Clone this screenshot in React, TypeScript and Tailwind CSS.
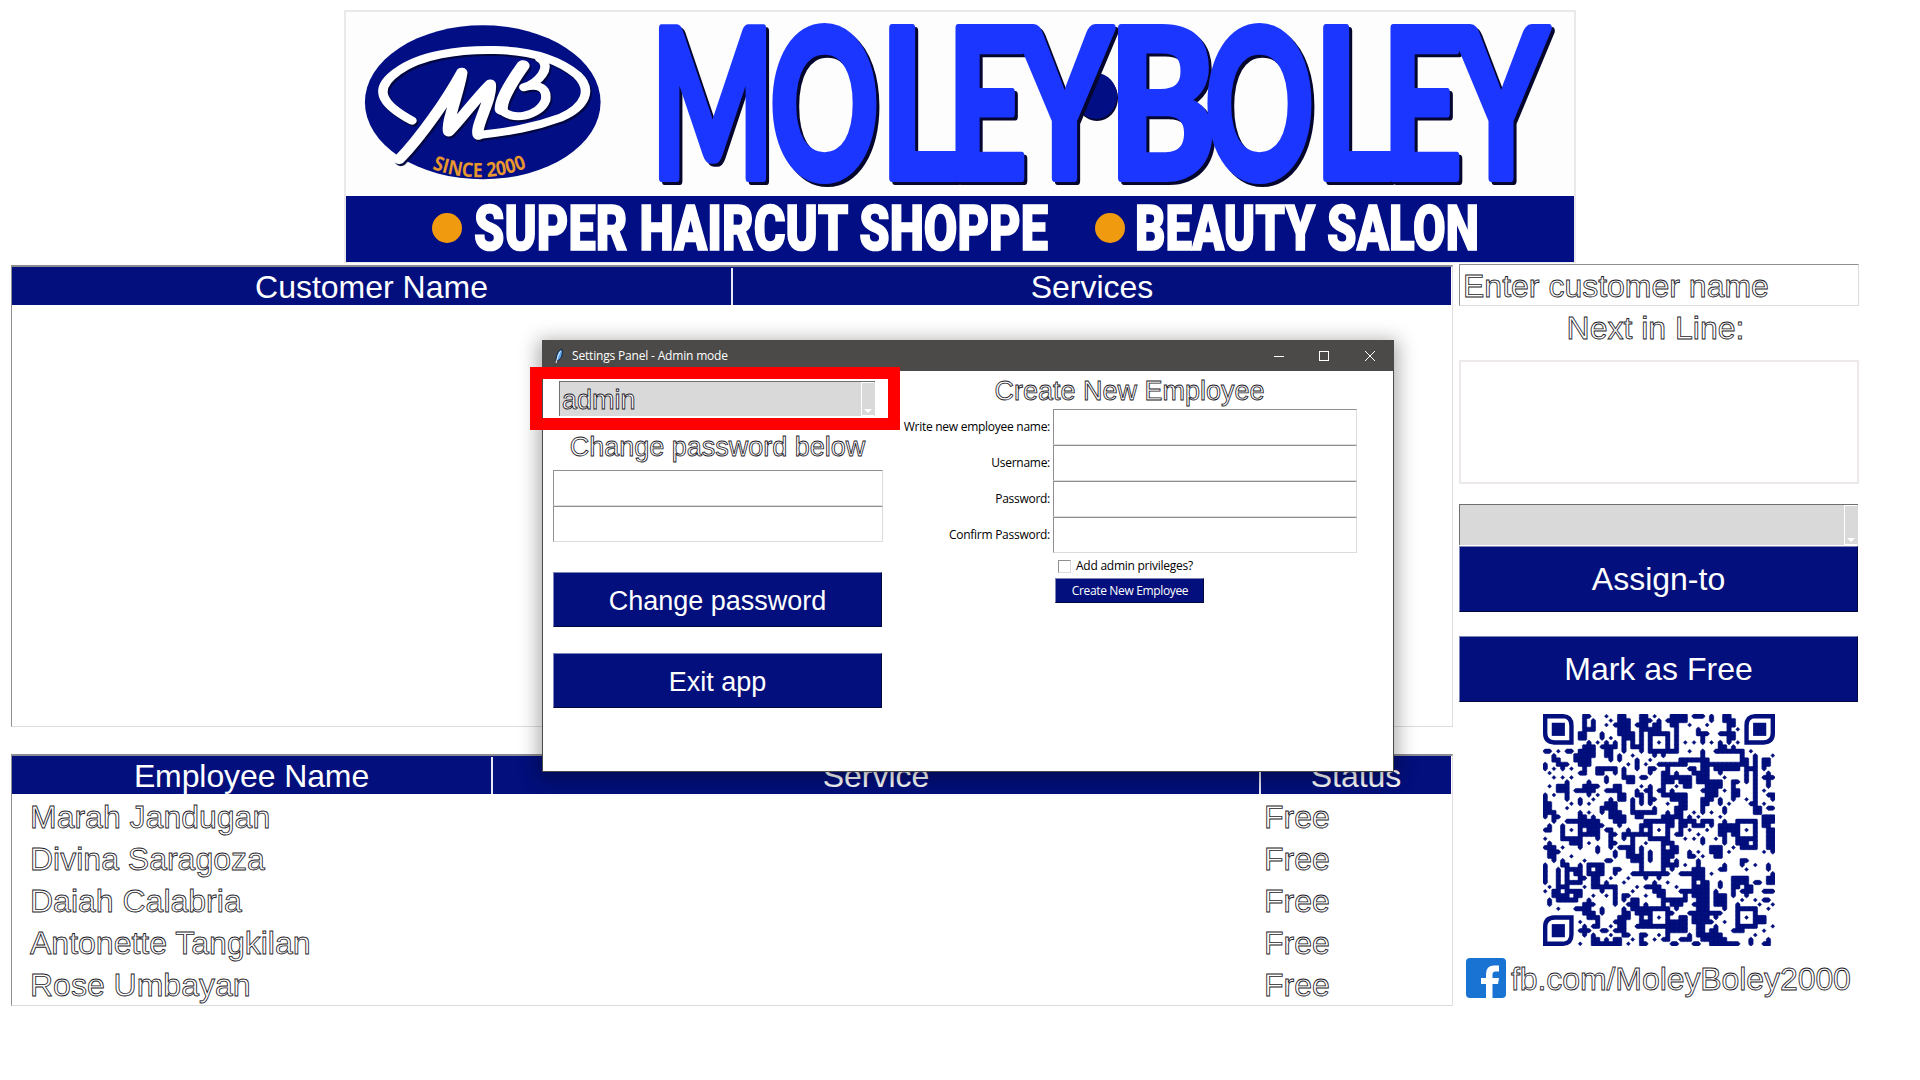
import React from "react";

const ROWS = [
  "9-10 14 17-18 22-23 25 29-32 34-36 38 41-42",
  "9 11 15 17-19 22-24 26 28-32 38 41-43",
  "9 11 14 16-19 21-23 25-26 29-30 33 37 42-43",
  "9-11 17-19 22-26 30 35 42 44",
  "8-9 13 17-20 22 24-28 30 35-37 40-43",
  "8-9 13 15 18-20 22 24 28 30 36 42-43",
  "10 12 14 16 18 20 22 24 26 28 30 32 34 36 38 40 42 44",
  "9-11 13-16 18 20-22 24 28 30 40-41 43",
  "0-1 3 5-6 8-11 14-15 18 22 24-30 33 36 39-44 45 47",
  "2 7-11 14-15 17 20 25 27 36 45 48 52",
  "2-3 7-10 15 17 21 24 31-37 45-46 48 50-51",
  "0 3-5 8-10 19 21 23 26-32 36-44 45-46 48 50-51",
  "0 2 4 6 9 12-16 18 21 24-25 28 33-34 36-37 39-44 46-48 50",
  "1 8-9 12-13 16 18 24 27-28 30 34-37 40 46 48 51",
  "2 4 6 14 18-20 22-23 27-33 35-37 41 46 48 50-52",
  "5 10 14 19-20 27-29 31-33 35-40 43-44 46 48 51",
  "1 3-5 9-12 16-17 22 24 27 30 32-33 37-40 43 48 51",
  "3-5 7-11 14-17 21 23-24 26-27 29 36-39 41 43-44 48 50",
  "0 2 5 10 12 17-18 21-22 24 27-32 37-39 43-44 48 51-52",
  "0 5 8 11 15 17-18 20 22 24-25 29-32 36-38 40 43 46 48 52",
  "0-1 6 8 10 14-16 20 22 24 28 31-32 36-37 40 42 47-48 50",
  "0-1 5 13-16 20 25 30-32 36 41 48-49 51-52",
  "0-2 8 10 13 15-17 20-25 28 30-31 34 36 38 41 48-49",
  "0 2-3 8-9 11 15-18 21-22 27-31 33 35 40 50-52",
  "2 5-12 16-18 23-29 31-34 36-38 41 44-48 50-52",
  "1 4 8-13 17 22-24 28-29 31-32 34-36 38 40-44 48 50-51",
  "0-1 4 6 8 10-12 14-15 19 22 24 26 28 31 33 37 40-44 46 48 51-52",
  "4 8-12 15-16 18-24 28 30-31 35 40-41 43-44 48 51-52",
  "0 4-8 12 15 18 20 24-28 32 34 36 39 41 44-48 51-52",
  "1 6-8 10 15-16 20 23 27-29 36 41 44-46 48 51-52",
  "0-2 4 8 12 15 17-20 22 27 29-30 38-40 43 45-48 51-52",
  "1-3 12 16 19-20 22 24 27-30 33 35 38-40 42 50 52",
  "1-2 6 16 19-22 24 27-29 33-34 36 39-40",
  "2 4 9 14-15 20-22 24 27-28 30 35 45-46",
  "0 4-5 8 10-13 22 27-28 29-30 32 35 41 45 48 51",
  "0 3 5-8 10 12-13 16-17 22 27 29 34-36 40-41 46 51",
  "0 3 5 7-8 10-13 16 20-28 31-36 38 52",
  "0 3 5 8-9 11-12 15 19 23 26 34-36 43-46 51-52",
  "0 3 5-8 11-12 14 18 25 28 34 36-37 40 43-46 48-49 51-52",
  "1 3-5 9 11-16 21 23-26 30 34-37 40 43-44 46-47",
  "0 2-3 5-8 13 16 20 25-27 31-37 39 43 45-47 50-52",
  "2-5 7-8 11 14 16 18-19 23 26-27 32 34-37 39-41 43 46",
  "1 3-7 10 16 18 20-21 27-32 35-37 39-41 45 48 50-51",
  "1 9-11 16 19-21 23 27 29-31 34-37 39-41 44 49 52",
  "3 7-10 13 18 20-28 30 35-37 41 44-48 51",
  "9-11 13 18-19 21-24 28-29 33-40 44 48",
  "10-12 17-19 22 24 26 28 31-32 34-37 39 44 46 48-50",
  "8 12 16-18 22-24 28-32 34-38 41 44 48-50",
  "9 11-12 15 17-18 21-32 35-36 39 44-48 52",
  "8-10 13-14 16-18 28-32 35-36 38-39 43-45 50",
  "9 11 15 18-19 22-23 26 28 33 35-40 48",
  "11-12 14 16-17 20 22 25 27-28 31-33 36-41 47 51",
  "8 11-17 19 22-23 29-30 34-35 38-44 47 50-51",
];

const GRID: boolean[][] = ROWS.map((row) => {
  const cells: boolean[] = Array(53).fill(false);
  row.split(" ").forEach((run) => {
    const [a, b] = run.split("-").map(Number);
    for (let i = a; i <= (b ?? a); i++) cells[i] = true;
  });
  return cells;
});

function modulePath(x: number, y: number): string {
  const on = (dx: number, dy: number) => !!GRID[y + dy]?.[x + dx];
  const t = on(0, -1), r = on(1, 0), b = on(0, 1), l = on(-1, 0);
  const n = [t, r, b, l].filter(Boolean).length;
  if (n === 0) return `M${x + 0.5} ${y + 0.05}l.45 .45l-.45 .45l-.45 -.45z`;
  const c = n === 1 ? 0.42 : 0.15;
  const tl = t || l ? 0 : c, tr = t || r ? 0 : c, br = b || r ? 0 : c, bl = b || l ? 0 : c;
  return `M${x + tl} ${y}L${x + 1 - tr} ${y}L${x + 1} ${y + tr}L${x + 1} ${y + 1 - br}L${x + 1 - br} ${y + 1}L${x + bl} ${y + 1}L${x} ${y + 1 - bl}L${x} ${y + tl}z`;
}

const MODULES = GRID.map((row, y) => row.map((v, x) => (v ? modulePath(x, y) : "")).join("")).join("");

function Finder({ x, y, flip }: { x: number; y: number; flip?: boolean }) {
  return (
    <g transform={flip ? `translate(${x + 7} ${y}) scale(-1 1)` : `translate(${x} ${y})`}>
      <path d="M.5 .5H4.600Q6.500 .6 6.500 2.600V6.500H2.600Q.5 6.400 .5 4.400Z" fill="none" stroke="#020f7c" />
      <rect x="2" y="2" width="3" height="3" fill="#020f7c" />
    </g>
  );
}

function QrCode() {
  return (
    <svg viewBox="0 0 53 53" className="block h-[232px] w-[232px]">
      <path d={MODULES} fill="#020f7c" stroke="#020f7c" strokeWidth=".12" />
      <Finder x={0} y={0} />
      <Finder x={46} y={0} flip />
      <g transform="translate(0 53) scale(1 -1)">
        <Finder x={0} y={0} />
      </g>
    </svg>
  );
}

const LETTERS: [string, number, number][] = [
  ["M", 651, 123],
  ["O", 770, 109],
  ["L", 880, 78],
  ["E", 947, 80],
  ["Y", 1017, 95],
  ["B", 1108, 108],
  ["O", 1205, 109],
  ["L", 1314, 78],
  ["E", 1382, 80],
  ["Y", 1454, 94],
];

function Banner() {
  return (
    <svg viewBox="344 10 1232 253" className="block h-[253px] w-[1232px] shrink-0">
      <rect x="345" y="11" width="1230" height="251" fill="#fdfdfd" stroke="#ebe8eb" strokeWidth="2" />
      <g transform="translate(340 0) scale(.3954 .3333)" fill="none" strokeLinecap="round" strokeLinejoin="round">
        <ellipse cx="361" cy="307" rx="298" ry="231" fill="#020f84" />
        <g className="drop-shadow-[4px_6px_0_#00063f]" stroke="#fff" strokeWidth="24">
          <path d="M182 362C100 310 85 265 145 215C200 165 300 148 390 150C490 152 555 180 600 225C640 270 620 320 560 352C490 382 430 395 350 405" />
          <path d="M505 175C540 200 500 250 465 262C500 250 525 262 520 300C505 350 430 365 408 328" />
          <path d="M350 405C340 380 385 300 380 253C340 300 305 360 275 395C268 370 300 280 308 218C270 300 205 410 150 478" strokeWidth="29" />
          <path d="M463 197C440 235 405 300 408 328" strokeWidth="33" />
        </g>
      </g>
      <path id="arc" d="M432 169Q482 187 531 166" fill="none" />
      <text fontFamily="Open Sans" fontWeight="700" fontSize="20" fill="#e8962e">
        <textPath href="#arc" textLength="97" lengthAdjust="spacingAndGlyphs">
          SINCE 2000
        </textPath>
      </text>
      <ellipse cx="1096" cy="96" rx="21" ry="23" fill="#020f84" className="drop-shadow-[1px_2px_0_#04062e]" />
      <g
        className="drop-shadow-[3px_3px_0_#04062e]"
        fill="#1a36ff"
        stroke="#1a36ff"
        strokeWidth="8"
        strokeLinejoin="round"
        fontFamily="Lato"
        fontWeight="700"
        fontSize="207"
      >
        {LETTERS.map(([ch, x, w], i) => (
          <text key={i} x={x} y="178" textLength={w} lengthAdjust="spacingAndGlyphs">
            {ch}
          </text>
        ))}
      </g>
      <rect x="346" y="196" width="1228" height="66" fill="#020f84" />
      <circle cx="447" cy="228" r="15" fill="#f09a10" />
      <circle cx="1110" cy="228" r="15" fill="#f09a10" />
      <g fill="#fff" stroke="#fff" strokeWidth="1.6" fontFamily="Roboto" fontWeight="900" fontSize="62.5">
        <text x="474" y="250" textLength="574" lengthAdjust="spacingAndGlyphs">
          SUPER HAIRCUT SHOPPE
        </text>
        <text x="1135" y="250" textLength="344" lengthAdjust="spacingAndGlyphs">
          BEAUTY SALON
        </text>
      </g>
    </svg>
  );
}

function Outline({ children, className = "" }: { children: React.ReactNode; className?: string }) {
  return (
    <span className={`block whitespace-nowrap text-white [-webkit-text-stroke:0.85px_#1d1a28] ${className}`}>{children}</span>
  );
}

function Field({ className = "", children }: { className?: string; children?: React.ReactNode }) {
  return (
    <div className={`shrink-0 border border-t-[#8f8f8f] border-r-[#dcdcdc] border-b-[#dcdcdc] border-l-[#8f8f8f] bg-white ${className}`}>
      {children}
    </div>
  );
}

function Combo({ className = "", children }: { className?: string; children?: React.ReactNode }) {
  return (
    <div className={`flex shrink-0 items-stretch justify-between border-t border-l border-[#6f6f6f] bg-[#d9d9d9] ${className}`}>
      <div className="pl-[2px]">{children}</div>
      <div className="mr-px flex w-[13px] items-end justify-center border-t border-b border-l border-white pb-[2px]">
        <svg viewBox="0 0 8 4" className="h-1 w-2">
          <path d="M0 0H8L4 4Z" fill="#fff" />
        </svg>
      </div>
    </div>
  );
}

function NavyButton({ className = "", children }: { className?: string; children: string }) {
  return (
    <button
      className={`flex shrink-0 items-center justify-center border border-t-[#7d84b8] border-r-[#01083f] border-b-[#01083f] border-l-[#7d84b8] bg-[#020f7c] text-white ${className}`}
    >
      {children}
    </button>
  );
}

function Th({ children, className = "" }: { children: string; className?: string }) {
  return <div className={`flex h-full items-center justify-center ${className}`}>{children}</div>;
}

const EMPLOYEES = ["Marah Jandugan", "Divina Saragoza", "Daiah Calabria", "Antonette Tangkilan", "Rose Umbayan"];
const FIELDS = ["Write new employee name:", "Username:", "Password:", "Confirm Password:"];

function SettingsWindow() {
  return (
    <div className="absolute top-[340px] left-[542px] h-[432px] w-[852px] border border-[#4b4a48] bg-white shadow-[0_4px_18px_4px_rgba(0,0,0,0.32)]">
      <div className="flex h-[30px] items-center bg-[#4b4a48] pl-[11px] font-['Open_Sans',sans-serif] text-[12px] text-white">
        <svg viewBox="0 0 10 16" className="mr-[8px] h-4 w-[10px]">
          <path d="M2.500 13C1.500 8 3.500 3 8 1C9 6 7.500 11 4 12.500Z" fill="#5ba3ec" stroke="#0a1a33" strokeWidth=".9" />
          <path d="M2 15Q3.500 8 6.500 3" fill="none" stroke="#e8f4ff" strokeWidth="1" />
        </svg>
        <span className="tracking-[-0.18px]">Settings Panel - Admin mode</span>
        <svg viewBox="0 0 102 12" className="mr-[17px] ml-auto h-3 w-[102px]" fill="none" stroke="#fff" shapeRendering="crispEdges">
          <path d="M0 6.500H10" />
          <path d="M45.500 1.500H54.500V10.500H45.500Z" />
          <path d="M91 1L101 11M101 1L91 11" shapeRendering="auto" />
        </svg>
      </div>
      <div className="flex">
        <div className="flex w-[352px] flex-col pl-[10px] text-[27px]">
          <Combo className="mt-[10px] ml-[6px] h-[35px] w-[316px]">
            <Outline className="leading-[36px]">admin</Outline>
          </Combo>
          <div className="flex h-[54px] w-[330px] items-center justify-center pt-[9px] pr-px">
            <Outline>Change password below</Outline>
          </div>
          <Field className="h-9 w-[330px]" />
          <Field className="h-9 w-[330px]" />
          <NavyButton className="mt-[30px] h-[55px] w-[329px] pt-[3px]">Change password</NavyButton>
          <NavyButton className="mt-[26px] h-[55px] w-[329px] pt-[3px]">Exit app</NavyButton>
        </div>
        <div className="w-[462px] font-['Open_Sans',sans-serif] text-[12px] text-black">
          <div className="flex h-[38px] items-center justify-center pt-[2px] pl-[7px] font-['Liberation_Sans',Arial,sans-serif] text-[27px]">
            <Outline>Create New Employee</Outline>
          </div>
          {FIELDS.map((label) => (
            <div key={label} className="flex h-9 items-center justify-end gap-[3px]">
              <span className="tracking-[-0.27px]">{label}</span>
              <Field className="h-9 w-[304px]" />
            </div>
          ))}
          <div className="mt-[5px] flex h-[17px] items-center gap-[5px] pl-[163px]">
            <Field className="h-[13px] w-[13px]" />
            <span className="-mt-[2px] tracking-[-0.25px]">Add admin privileges?</span>
          </div>
          <NavyButton className="mt-[3px] ml-[160px] h-[25px] w-[149px] pl-px tracking-[-0.35px]">Create New Employee</NavyButton>
        </div>
      </div>
      <div className="absolute top-[26px] left-[-13px] h-[63px] w-[370px] border-[12px] border-[#ff0000]" />
    </div>
  );
}

export default function App() {
  return (
    <div className="relative h-[1080px] w-[1920px] overflow-hidden bg-white pt-[10px] font-['Liberation_Sans',Arial,sans-serif] text-[32px]">
      <div className="flex h-[254px] justify-center">
        <Banner />
      </div>
      <div className="flex pl-[11px]">
        <div className="w-[1442px]">
          <div className="mt-px h-[462px] border border-t-2 border-t-[#8b8b91] border-r-[#e2dde2] border-b-[#dcdcdc] border-l-[#8f8f8f]">
            <div className="mr-px flex h-[38px] bg-[#020f7c] pt-px text-white">
              <Th className="w-[721px] border-r-2 border-[#e8e8f4]">Customer Name</Th>
              <Th className="flex-1">Services</Th>
            </div>
          </div>
          <div className="mt-[27px] h-[252px] border border-t-2 border-t-[#8b8b91] border-r-[#e2dde2] border-b-[#dcdcdc] border-l-[#8f8f8f]">
            <div className="mr-px flex h-[38px] bg-[#020f7c] pt-px text-white">
              <Th className="w-[481px] border-r-2 border-[#e8e8f4] tracking-[-0.1px]">Employee Name</Th>
              <Th className="w-[768px] border-r-2 border-[#e8e8f4]">Service</Th>
              <Th className="flex-1">Status</Th>
            </div>
            {EMPLOYEES.map((name) => (
              <div key={name} className="flex h-[42px] items-center pt-[3px] pl-[18px]">
                <Outline className="w-[1234px]">{name}</Outline>
                <Outline>Free</Outline>
              </div>
            ))}
          </div>
        </div>
        <div className="ml-[6px] flex w-[400px] flex-col">
          <Field className="h-[42px] w-full">
            <Outline className="pt-[3px] pl-[3px] leading-[36px]">Enter customer name</Outline>
          </Field>
          <div className="flex h-[54px] justify-center pt-[4px] pr-[7px]">
            <Outline className="leading-[36px]">Next in Line:</Outline>
          </div>
          <div className="h-[124px] shrink-0 border-2 border-[#ece8ec]" />
          <Combo className="mt-[20px] h-[41px] w-[399px]" />
          <NavyButton className="mt-px h-[66px] w-[399px]">Assign-to</NavyButton>
          <NavyButton className="mt-[24px] h-[66px] w-[399px]">Mark as Free</NavyButton>
          <div className="mt-[12px] ml-[84px]">
            <QrCode />
          </div>
          <div className="mt-[12px] ml-[7px] flex h-10 items-center gap-[5px]">
            <svg viewBox="0 0 40 40" className="h-10 w-10 shrink-0">
              <rect width="40" height="40" rx="4" fill="#1873d3" />
              <path d="M20 40V26H15V20H20V16Q20 7.500 28 7.500H33V13.500H29.500Q26.500 13.500 26.500 16.500V20H33L32 26H26.500V40Z" fill="#fff" />
            </svg>
            <Outline className="pt-px tracking-[-0.08px]">fb.com/MoleyBoley2000</Outline>
          </div>
        </div>
      </div>
      <SettingsWindow />
    </div>
  );
}
